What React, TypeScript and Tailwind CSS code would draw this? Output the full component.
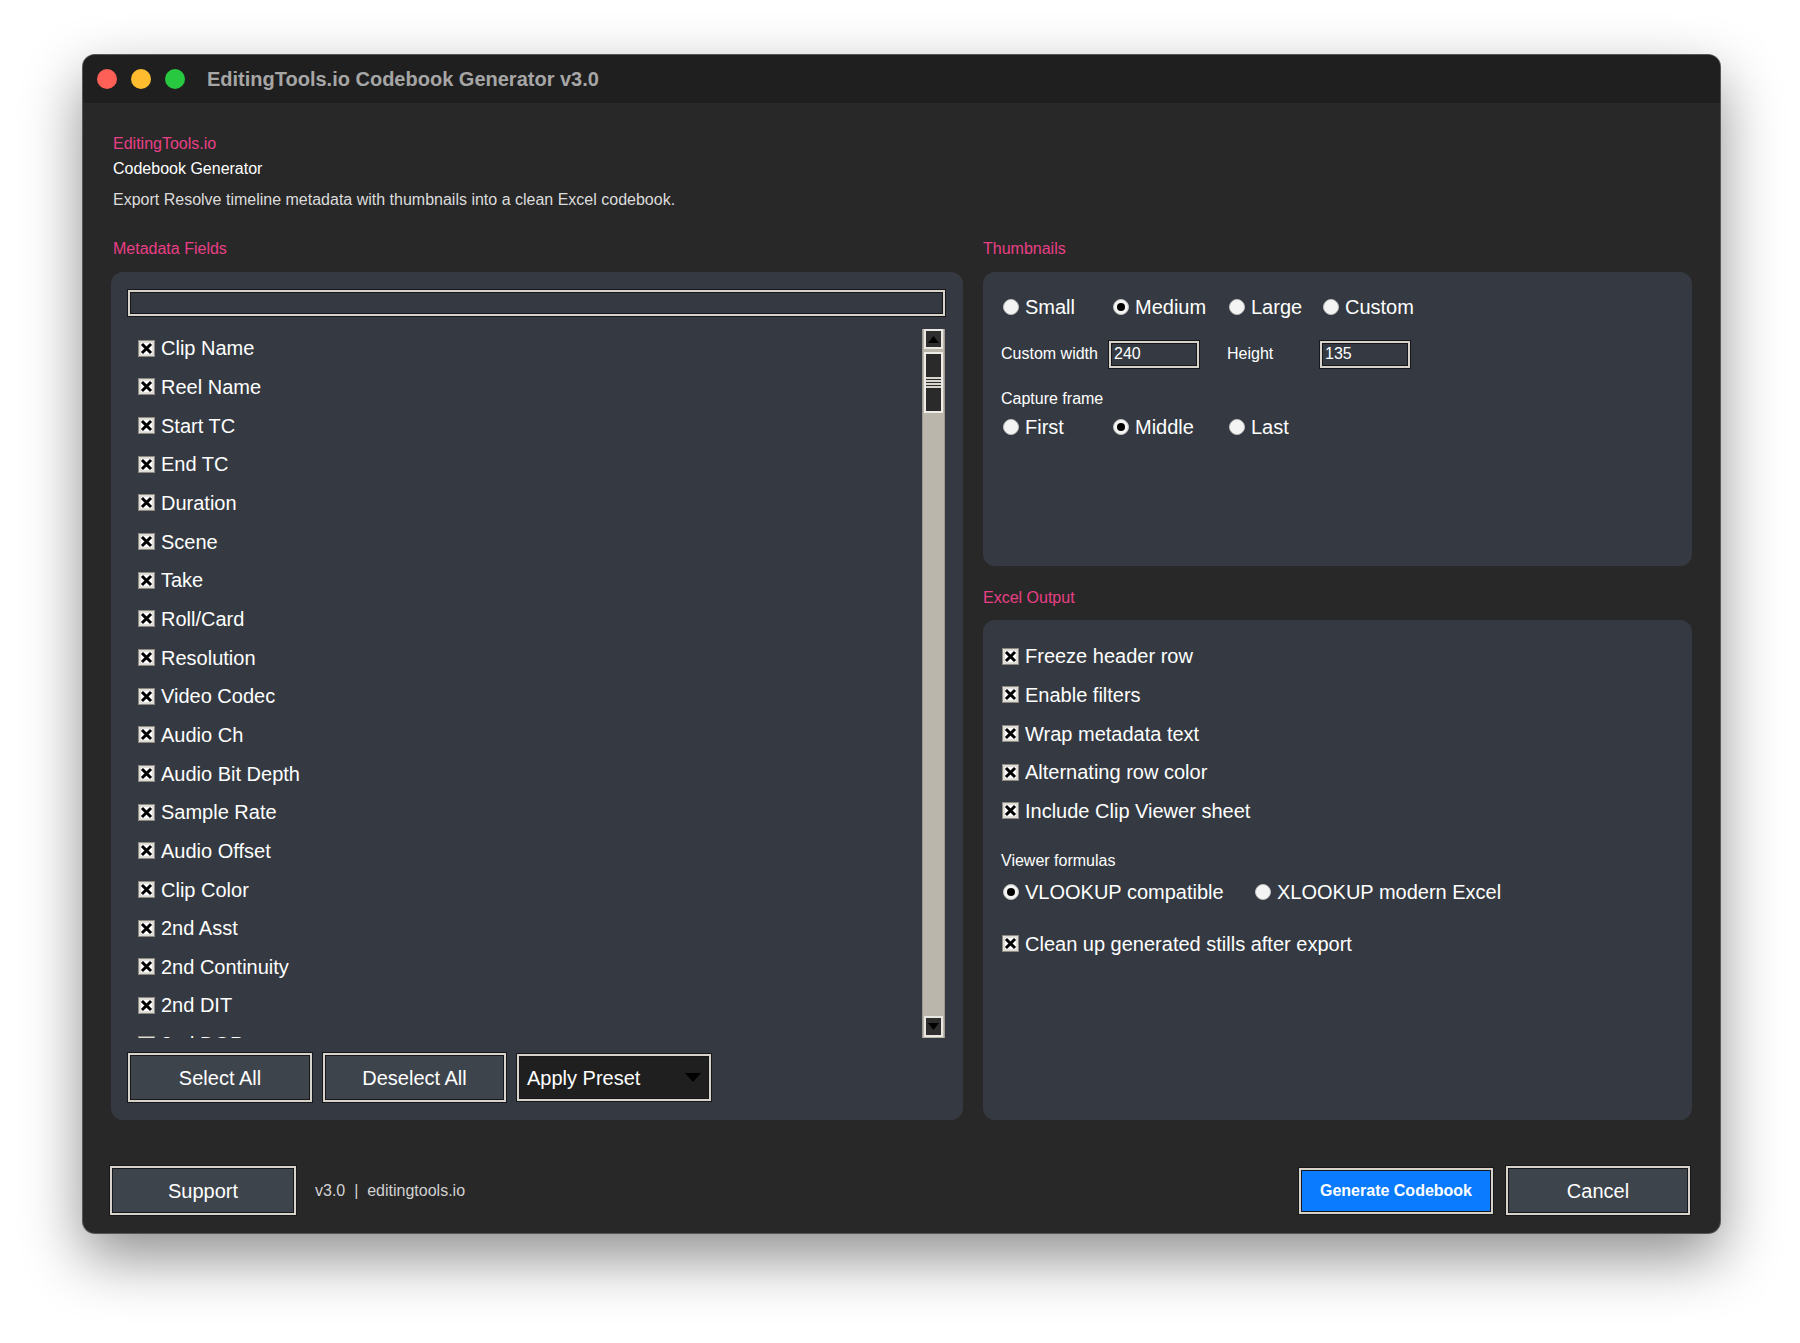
import type { JSX, ReactNode } from "react";

const FIELDS = [
  "Clip Name",
  "Reel Name",
  "Start TC",
  "End TC",
  "Duration",
  "Scene",
  "Take",
  "Roll/Card",
  "Resolution",
  "Video Codec",
  "Audio Ch",
  "Audio Bit Depth",
  "Sample Rate",
  "Audio Offset",
  "Clip Color",
  "2nd Asst",
  "2nd Continuity",
  "2nd DIT",
  "2nd DOP",
];

const EXCEL_OPTIONS = [
  "Freeze header row",
  "Enable filters",
  "Wrap metadata text",
  "Alternating row color",
  "Include Clip Viewer sheet",
];

/** Tk style checkbox with a bold X */
function CheckBox(): JSX.Element {
  return (
    <svg width="17" height="17" viewBox="0 0 17 17" className="shrink-0">
      <rect x="0.5" y="0.5" width="16" height="16" fill="#f2f0ea" stroke="#8d8a83" />
      <rect x="2" y="2" width="13" height="13" fill="#ffffff" stroke="#c9c6bf" strokeWidth="1" />
      <path d="M5 5 L12 12 M12 5 L5 12" stroke="#000" strokeWidth="3" strokeLinecap="square" />
    </svg>
  );
}

function Radio({ on }: { on?: boolean }): JSX.Element {
  return (
    <svg width="16" height="16" viewBox="0 0 16 16" className="shrink-0">
      <circle cx="8" cy="8" r="7.5" fill="#f4f4f4" stroke="#c4c4c4" strokeWidth="1" />
      {on && <circle cx="8" cy="8" r="4" fill="#000" />}
    </svg>
  );
}

function CheckRow({ label, h = "h-[38.67px]" }: { label: string; h?: string }): JSX.Element {
  return (
    <div className={`flex items-center gap-[6px] ${h}`}>
      <CheckBox />
      <span className="text-[20px] leading-[24px] text-white whitespace-nowrap">{label}</span>
    </div>
  );
}

function RadioItem({ label, on }: { label: string; on?: boolean }): JSX.Element {
  return (
    <div className="flex items-center gap-[6px] h-[24px]">
      <Radio on={on} />
      <span className="text-[20px] leading-[24px] text-white whitespace-nowrap">{label}</span>
    </div>
  );
}

/** Bevelled Tk widget frame (buttons, entries) */
function Bevel({
  className,
  children,
}: {
  className: string;
  children?: ReactNode;
}): JSX.Element {
  return (
    <div
      className={`border-2 border-[#d7d3ca] shadow-[0_0_0_1px_#16181b,inset_0_0_0_1px_#16181b] ${className}`}
    >
      {children}
    </div>
  );
}

function Entry({ value, className }: { value: string; className: string }): JSX.Element {
  return (
    <Bevel className={`bg-[#353a42] flex items-center pl-[3px] ${className}`}>
      <span className="text-[16px] leading-[20px] text-white">{value}</span>
    </Bevel>
  );
}

function TkButton({ label, className }: { label: string; className: string }): JSX.Element {
  return (
    <Bevel className={`bg-[#3e444c] flex items-center justify-center ${className}`}>
      <span className="text-[20px] leading-[24px] text-white">{label}</span>
    </Bevel>
  );
}

function Scrollbar(): JSX.Element {
  return (
    <div className="w-[23px] h-full bg-[#bab6ac] border-x border-[#9d9990] flex flex-col items-center pt-[0px] pb-[1px]">
      {/* up arrow */}
      <div className="w-[19px] h-[20px] border-2 border-[#e9e7e1] bg-[#2e2e2e] flex items-center justify-center">
        <svg width="11" height="7" viewBox="0 0 11 7">
          <path d="M0 7 L5.5 0 L11 7 Z" fill="#000" />
        </svg>
      </div>
      {/* slider */}
      <div className="mt-[3px] w-[19px] h-[61px] border-2 border-[#eeece7] bg-[#2a2a2a] flex flex-col justify-center gap-[1px]">
        <div className="h-[2px] bg-[#d8d5cd]" />
        <div className="h-[2px] bg-[#d8d5cd]" />
        <div className="h-[2px] bg-[#d8d5cd]" />
        <div className="h-[2px] bg-[#d8d5cd]" />
      </div>
      <div className="flex-1" />
      {/* down arrow */}
      <div className="w-[19px] h-[21px] border-2 border-[#e9e7e1] bg-[#2e2e2e] flex items-center justify-center">
        <svg width="11" height="7" viewBox="0 0 11 7">
          <path d="M0 0 L5.5 7 L11 0 Z" fill="#000" />
        </svg>
      </div>
    </div>
  );
}

function SectionLabel({ children }: { children: ReactNode }): JSX.Element {
  return <div className="text-[16px] leading-[20px] text-[#e83f86]">{children}</div>;
}

export default function App(): JSX.Element {
  return (
    <div
      className="w-[1800px] h-[1343px] bg-white pl-[83px] pt-[55px]"
      style={{ fontFamily: '"Liberation Sans", Arial, sans-serif' }}
    >
      <div className="w-[1637px] h-[1178px] rounded-[12px] overflow-hidden bg-[#282828] shadow-[0_0_0_1px_#575757,0_24px_60px_rgba(0,0,0,0.45)] flex flex-col">
        {/* Title bar */}
        <div className="h-[48px] bg-[#1f1f1f] flex items-center pl-[14px]">
          <div className="flex items-center gap-[14px]">
            <div className="w-[20px] h-[20px] rounded-full bg-[#fe5f57]" />
            <div className="w-[20px] h-[20px] rounded-full bg-[#febc2e]" />
            <div className="w-[20px] h-[20px] rounded-full bg-[#28c840]" />
          </div>
          <div className="ml-[22px] text-[20px] font-bold text-[#a6a6a6]">
            EditingTools.io Codebook Generator v3.0
          </div>
        </div>

        {/* Content */}
        <div className="flex-1 flex flex-col px-[28px] pt-[31px]">
          <div className="pl-[2px] text-[16px] leading-[20px] text-[#e83f86]">EditingTools.io</div>
          <div className="pl-[2px] mt-[5px] text-[16px] leading-[20px] text-white">Codebook Generator</div>
          <div className="pl-[2px] mt-[11px] text-[16px] leading-[20px] text-[#dcdcdc]">
            Export Resolve timeline metadata with thumbnails into a clean Excel codebook.
          </div>

          <div className="mt-[29px] flex gap-[20px]">
            {/* Metadata fields column */}
            <div className="w-[852px] flex flex-col">
              <div className="pl-[2px]">
                <SectionLabel>Metadata Fields</SectionLabel>
              </div>
              <div className="mt-[13px] h-[848px] rounded-[12px] bg-[#353a42] pt-[18px] pl-[17px] pr-[18px] flex flex-col">
                <Bevel className="h-[26px] bg-[#353a42]" />
                <div className="mt-[13px] h-[709px] flex">
                  <div className="flex-1 overflow-hidden pl-[10px]">
                    {FIELDS.map((f) => (
                      <CheckRow key={f} label={f} />
                    ))}
                  </div>
                  <Scrollbar />
                </div>
                <div className="mt-[15px] flex gap-[11px]">
                  <TkButton label="Select All" className="w-[184px] h-[49px]" />
                  <TkButton label="Deselect All" className="w-[183px] h-[49px]" />
                  <Bevel className="mt-[1px] w-[194px] h-[47px] bg-[#1f1f1f] flex items-center justify-between pl-[8px] pr-[8px]">
                    <span className="text-[20px] leading-[24px] text-white">Apply Preset</span>
                    <svg width="16" height="9" viewBox="0 0 16 9">
                      <path d="M0 0 L16 0 L8 9 Z" fill="#000" />
                    </svg>
                  </Bevel>
                </div>
              </div>
            </div>

            {/* Right column */}
            <div className="flex-1 flex flex-col">
              <SectionLabel>Thumbnails</SectionLabel>
              <div className="mt-[13px] h-[294px] rounded-[12px] bg-[#353a42] pt-[23px] px-[18px] flex flex-col">
                <div className="pl-[2px] grid grid-cols-[110px_116px_94px_auto]">
                  <RadioItem label="Small" />
                  <RadioItem label="Medium" on />
                  <RadioItem label="Large" />
                  <RadioItem label="Custom" />
                </div>
                <div className="mt-[21px] h-[28px] flex items-center">
                  <span className="w-[108px] text-[16px] leading-[20px] text-white">Custom width</span>
                  <Entry value="240" className="w-[90px] h-[27px]" />
                  <span className="ml-[28px] w-[93px] text-[16px] leading-[20px] text-white">Height</span>
                  <Entry value="135" className="w-[90px] h-[27px]" />
                </div>
                <div className="mt-[21px] text-[16px] leading-[20px] text-white">Capture frame</div>
                <div className="mt-[6px] pl-[2px] grid grid-cols-[110px_116px_94px_auto]">
                  <RadioItem label="First" />
                  <RadioItem label="Middle" on />
                  <RadioItem label="Last" />
                </div>
              </div>

              <div className="mt-[22px]">
                <SectionLabel>Excel Output</SectionLabel>
              </div>
              <div className="mt-[12px] flex-1 rounded-[12px] bg-[#353a42] pt-[17px] px-[18px] flex flex-col">
                <div className="pl-[1px]">
                  {EXCEL_OPTIONS.map((o) => (
                    <CheckRow key={o} label={o} />
                  ))}
                </div>
                <div className="mt-[21px] text-[16px] leading-[20px] text-white">Viewer formulas</div>
                <div className="mt-[9px] pl-[2px] flex">
                  <div className="w-[252px]">
                    <RadioItem label="VLOOKUP compatible" on />
                  </div>
                  <RadioItem label="XLOOKUP modern Excel" />
                </div>
                <div className="mt-[20px] pl-[1px]">
                  <CheckRow label="Clean up generated stills after export" />
                </div>
              </div>
            </div>
          </div>

          {/* Footer */}
          <div className="mt-[46px] h-[49px] flex items-center">
            <TkButton label="Support" className="-ml-[1px] w-[186px] h-[49px]" />
            <span className="ml-[19px] text-[16px] leading-[20px] text-[#d2d2d2]">
              v3.0&nbsp; |&nbsp; editingtools.io
            </span>
            <div className="flex-1" />
            <Bevel className="w-[194px] h-[46px] bg-[#0a7bff] flex items-center justify-center">
              <span className="text-[16px] leading-[20px] font-bold text-white">Generate Codebook</span>
            </Bevel>
            <TkButton label="Cancel" className="ml-[13px] mr-[2px] w-[184px] h-[49px]" />
          </div>
        </div>
      </div>
    </div>
  );
}
